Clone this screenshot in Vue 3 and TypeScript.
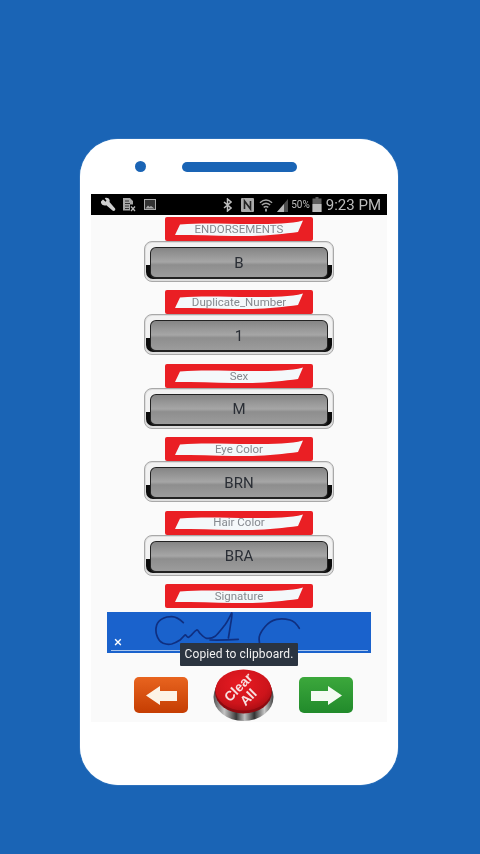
<script setup lang="ts">
const fields = [
  { label: 'ENDORSEMENTS', value: 'B' },
  { label: 'Duplicate_Number', value: '1' },
  { label: 'Sex', value: 'M' },
  { label: 'Eye Color', value: 'BRN' },
  { label: 'Hair Color', value: 'BRA' },
]
</script>

<template>
  <div class="page">
    <div class="phone">
      <div class="top">
        <span class="camera"></span>
        <span class="speaker"></span>
      </div>
      <div class="screen">
        <div class="status">
          <div class="status-left">
            <svg width="16" height="16" viewBox="0 0 16 16"><path d="M1 4.500 3 2.500l2.600 2.200.9-.9L4.800 1.200C6.600.2 9 1 9.600 3c.2.800.1 1.400-.1 2l5.400 6.200c.6.700.5 1.700-.1 2.300s-1.600.7-2.300.1L6.300 8.200C4.200 8.900 2 8 1.200 6.200c-.2-.5-.3-1.100-.2-1.700Z" fill="#d0d0d0"/></svg>
            <svg width="14" height="15" viewBox="0 0 14 15"><path d="M1 1h7l3 3v3.500H8v6H1Z" fill="#a8a8a8"/><path d="M3 4h4M3 6.500h5M3 9h4M3 11.500h4" stroke="#333" stroke-width="1"/><path d="M9 9.500l4 4.500M13 9.500l-4 4.500" stroke="#b5b5b5" stroke-width="1.300"/></svg>
            <svg class="pic" width="12" height="11" viewBox="0 0 12 11"><rect x=".5" y=".5" width="11" height="10" fill="#333" stroke="#aaa"/><path d="M1.500 9.500 4 6.500l1.500 1.500 1.500-1 3.500 2.500Z" fill="#aaa"/></svg>
          </div>
          <div class="status-right">
            <svg width="9" height="14" viewBox="0 0 9 14"><path d="M1 4l7 6-3.500 3V1L8 4l-7 6" fill="none" stroke="#bdbdbd" stroke-width="1.500"/></svg>
            <svg class="nfc" width="13" height="14" viewBox="0 0 13 14"><rect width="13" height="14" rx="1" fill="#aaa"/><path d="M3.500 11V3l6 8V3" fill="none" stroke="#222" stroke-width="1.600"/></svg>
            <svg class="wifi" width="14" height="14" viewBox="0 0 15 14"><path d="M1 4.500C5 1 10 1 14 4.500M3 7c3-2.500 6-2.500 9 0M5 9.500c1.700-1.300 3.300-1.300 5 0" fill="none" stroke="#a5a5a5" stroke-width="1.500"/><path d="M6.500 11h2v3h-2Z" fill="#a5a5a5"/></svg>
            <svg class="signal" width="11" height="14" viewBox="0 0 11 14"><path d="M0 14 11 1v13Z" fill="#4c4c4c"/><path d="M0 14 7 6v8Z" fill="#b8b8b8"/></svg>
            <span class="pct">50%</span>
            <svg class="battery" width="10" height="15" viewBox="0 0 9 15"><path d="M3 0h3v1.500h3V15H0V1.500h3Z" fill="#5e5e5e"/><path d="M0 7h9v8H0Z" fill="#bcbcbc"/></svg>
            <span class="time">9:23 PM</span>
          </div>
        </div>

        <div class="content">
          <div v-for="f in fields" :key="f.label" class="field">
            <div class="tag">
              <svg class="brush" viewBox="0 0 148 24" preserveAspectRatio="none"><path d="M10 18 15 7.500C40 5.500 60 7 85 7S125 7 138 3.500L133 15C118 17 100 19 82 19S45 18.500 25 18Z" fill="#f4f8fa"/></svg>
              <span class="tag-text">{{ f.label }}</span>
            </div>
            <div class="btn">
              <div class="frame">
                <div class="face">{{ f.value }}</div>
              </div>
            </div>
          </div>

          <div class="tag">
            <svg class="brush" viewBox="0 0 148 24" preserveAspectRatio="none"><path d="M10 18 15 7.500C40 5.500 60 7 85 7S125 7 138 3.500L133 15C118 17 100 19 82 19S45 18.500 25 18Z" fill="#f4f8fa"/></svg>
            <span class="tag-text">Signature</span>
          </div>

          <div class="pad">
            <svg class="sig" viewBox="0 0 264 41">
              <path d="M76.300 10.700C72 6.500 68 4.700 64.700 4.700c-3.400 0-6.400.5-8.400 1.600C53 8 50.500 10.500 49.700 13c-1 3.500-1 7 0 10 1 3.500 3.600 7 6.600 8.300 3 1.200 6 1.200 8.400.7 3-.7 6-2.500 8.300-4 2-1.500 3.500-4 5-5 1-.5 2 2.500 3.300 2.300 3-.5 5.500-6.300 8.400-7.300 1.300-.4 2 2 3.300 3.300 2 2 4.500 4.800 6.700 5 3 .3 6-.2 8.400-2 3.500-3 7-8 10-11.600 2.500-3 5-8.700 6.700-11.700.5 2.500-.3 6-1 10-.7 5-1.600 10-2.400 15M103 28c10 .2 19 0 28.300-.7M192.300 16.300C190 12.500 187 9 183 8c-4.500-1.200-9-1.500-13.300-.7C165.500 8.200 161 11 158 14.700c-2.500 3-5 6.500-5.700 10-.5 3.500 0 7 1.400 10" fill="none" stroke="#0f2f80" stroke-width="1.700" stroke-linecap="round" stroke-linejoin="round"/>
            </svg>
            <span class="pad-x">×</span>
            <span class="pad-line"></span>
            <div class="toast">Copied to clipboard.</div>
          </div>

          <div class="actions">
            <button class="nav nav-back" aria-label="Back">
              <svg width="31" height="19" viewBox="0 0 31 19"><path d="M0 9.500 14 0v5h17v10H14v4Z" fill="#fdf3e6"/></svg>
            </button>
            <svg class="clear" width="61" height="54" viewBox="0 0 61 54">
              <defs>
                <radialGradient id="redTop" cx="45%" cy="35%" r="70%">
                  <stop offset="0" stop-color="#e81a22"/>
                  <stop offset=".7" stop-color="#cd141b"/>
                  <stop offset="1" stop-color="#a80d13"/>
                </radialGradient>
                <linearGradient id="rim" x1="0" x2="1" y1="0" y2="0">
                  <stop offset="0" stop-color="#555"/>
                  <stop offset=".18" stop-color="#c4c4c4"/>
                  <stop offset=".38" stop-color="#3a3a3a"/>
                  <stop offset=".52" stop-color="#bdbdbd"/>
                  <stop offset=".68" stop-color="#333"/>
                  <stop offset=".85" stop-color="#c8c8c8"/>
                  <stop offset="1" stop-color="#444"/>
                </linearGradient>
              </defs>
              <ellipse cx="30.500" cy="29" rx="30" ry="24" fill="url(#rim)"/>
              <ellipse cx="30.500" cy="24" rx="28.500" ry="21.500" fill="#8d0a10"/>
              <ellipse cx="30.500" cy="22" rx="28" ry="20.500" fill="url(#redTop)"/>
              <g transform="rotate(-45 30 24)" fill="#f7e0e0" font-family="Liberation Sans, Arial, sans-serif" font-size="13.500" font-weight="700" text-anchor="middle">
                <text x="30" y="22">Clear</text>
                <text x="30" y="36">All</text>
              </g>
            </svg>
            <button class="nav nav-next" aria-label="Next">
              <svg width="31" height="19" viewBox="0 0 31 19"><path d="M31 9.500 17 0v5H0v10h17v4Z" fill="#f4fbf2"/></svg>
            </button>
          </div>
        </div>
      </div>
    </div>
  </div>
</template>

<style>
html, body { margin: 0; padding: 0; background: #1a64b5; }
</style>

<style scoped>
.page {
  width: 480px;
  height: 854px;
  box-sizing: border-box;
  padding: 139px 0 0 80px;
  background: #1a64b5;
  overflow: hidden;
  font-family: Roboto, "Liberation Sans", sans-serif;
}
.phone {
  width: 318px;
  height: 646px;
  background: #fff;
  border-radius: 38px;
  box-shadow: 0 0 1px #dcecf8;
}
.top {
  height: 55px;
  display: flex;
  align-items: center;
  padding-left: 55px;
  gap: 36px;
  box-sizing: border-box;
}
.camera { width: 11px; height: 11px; border-radius: 50%; background: #1a64b5; }
.speaker { width: 115px; height: 10px; border-radius: 5px; background: #1a64b5; }
.screen { margin: 0 11px; width: 296px; filter: blur(.35px); }
.status {
  height: 21px;
  background: #000;
  display: flex;
  justify-content: space-between;
  align-items: center;
  padding: 0 6px 0 9px;
  color: #bdbdbd;
}
.status-left, .status-right { display: flex; align-items: center; }
.status-left { gap: 6px; }
.pic { margin-left: 2px; }
.nfc { margin-left: 9px; }
.wifi { margin-left: 5px; }
.signal { margin-left: 4px; }
.pct { font-size: 10px; margin-left: 3px; }
.battery { margin-left: 2px; }
.time { font-size: 15px; margin-left: 4px; }
.content {
  height: 507px;
  background: #fafafa;
  display: flex;
  flex-direction: column;
  align-items: center;
  padding-top: 2px;
  box-sizing: border-box;
}
.field {
  display: flex;
  flex-direction: column;
  align-items: center;
  margin-bottom: 8.400px;
}
.tag {
  width: 148px;
  height: 24px;
  box-sizing: border-box;
  padding-top: 1px;
  background: #ea1f24;
  border-radius: 2px;
  position: relative;
  display: flex;
  align-items: center;
  justify-content: center;
  flex: none;
}
.brush { position: absolute; inset: 0; width: 100%; height: 100%; }
.tag-text { position: relative; font-size: 11.500px; color: #85898f; line-height: 1; }
.btn {
  width: 190px;
  height: 41px;
  box-sizing: border-box;
  border: 1px solid #a8a8a8;
  border-radius: 8px;
  background: #dedede;
  padding: 1px 1px 2px;
}
.frame {
  height: 100%;
  box-sizing: border-box;
  border-radius: 6px 6px 7px 7px;
  background: linear-gradient(#f2f2f2 0 62%, #0c0c0c 62% 100%);
  padding: 4px 4px 0;
}
.face {
  height: 100%;
  box-sizing: border-box;
  border: 1px solid #222;
  border-bottom-width: 2px;
  border-radius: 6px;
  background: linear-gradient(#858585, #a6a6a6 48%, #8e8e8e 58%, #9c9c9c 100%);
  display: flex;
  align-items: center;
  justify-content: center;
  font-size: 15px;
  color: #2a2e35;
}
.pad {
  width: 264px;
  height: 41px;
  margin-top: 4px;
  background: #1a62cc;
  position: relative;
  flex: none;
}
.sig { position: absolute; inset: 0; width: 100%; height: 100%; }
.pad-x { position: absolute; left: 7px; top: 22px; color: #fff; font-size: 15px; line-height: 16px; }
.pad-line { position: absolute; left: 4px; right: 3px; bottom: 2px; height: 1px; background: #a9c6ee; }
.toast {
  position: absolute;
  left: 73px;
  top: 31px;
  width: 118px;
  height: 23px;
  background: #2b3440;
  color: #f0f0f0;
  font-size: 12px;
  letter-spacing: .1px;
  display: flex;
  align-items: center;
  justify-content: center;
  border-radius: 1px;
  white-space: nowrap;
  z-index: 2;
}
.actions {
  width: 264px;
  display: flex;
  justify-content: space-between;
  align-items: center;
  margin-top: 15px;
  padding: 0 18px 0 27px;
  box-sizing: border-box;
}
.nav {
  width: 54px;
  height: 36px;
  margin-top: 1px;
  border: 0;
  border-radius: 5px;
  padding: 0;
  display: flex;
  align-items: center;
  justify-content: center;
}
.nav-back { background: linear-gradient(#e8641f, #c53d02); }
.nav-next { background: linear-gradient(#3ca83c, #218a2b); }
</style>
